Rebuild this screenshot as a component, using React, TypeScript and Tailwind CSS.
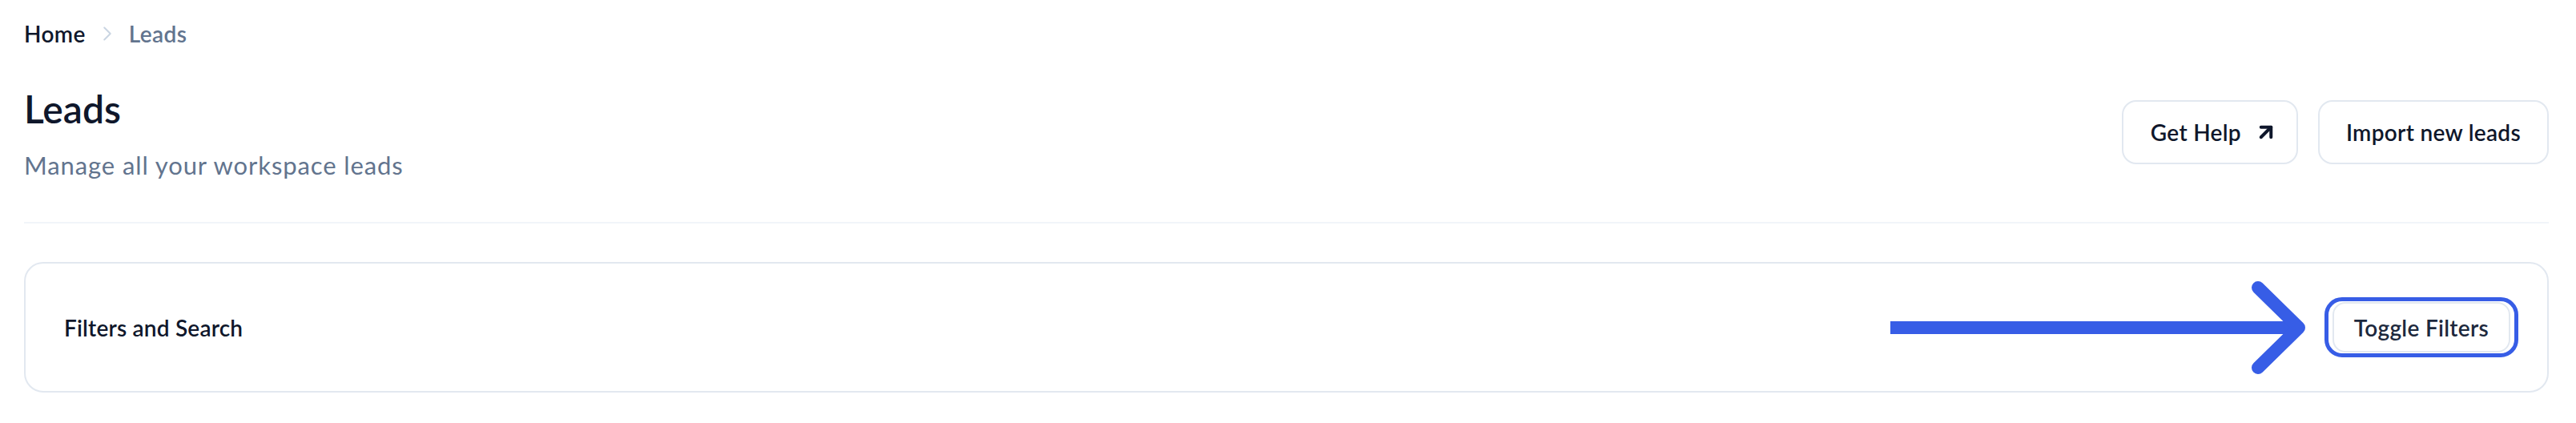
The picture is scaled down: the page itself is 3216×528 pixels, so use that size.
import React from 'react';
import { ArrowUpRight, ChevronRight } from 'lucide-react';

const Arrow = () => (
  <svg width="520" height="120" viewBox="0 0 520 120" fill="none" className="shrink-0">
    <rect x="0" y="52" width="506" height="16" fill="#375de6" />
    <polyline
      points="459,10 510,60 459,110"
      stroke="#375de6"
      strokeWidth="16"
      strokeLinecap="round"
      strokeLinejoin="round"
      fill="none"
    />
  </svg>
);

const App: React.FC = () => {
  return (
    <div className="h-[528px] w-full bg-white pl-[30px] pr-[34px] pt-[22px] font-['Lato',sans-serif] text-slate-900">
      <nav className="flex h-[40px] items-center gap-[12px] text-[28px] font-semibold tracking-[0.4px]">
        <span className="text-slate-900">Home</span>
        <ChevronRight size={30} strokeWidth={1.6} className="text-slate-300" />
        <span className="text-slate-500">Leads</span>
      </nav>

      <div className="mt-[42px] flex items-center justify-between border-b-2 border-slate-100 pb-[51px]">
        <div>
          <h1 className="text-[48px] font-semibold leading-[64px]">Leads</h1>
          <p className="mt-[18px] text-[31px] leading-[40px] tracking-[0.9px] text-slate-500">Manage all your workspace leads</p>
        </div>
        <div className="flex items-center gap-[25px]">
          <button className="flex h-[80px] items-center gap-[16px] rounded-[18px] border-2 border-slate-200 bg-white pl-[34px] pr-[23px] text-[28px] font-semibold tracking-[0.3px] text-slate-900">
            Get Help
            <ArrowUpRight size={30} strokeWidth={3.2} />
          </button>
          <button className="flex h-[80px] items-center rounded-[18px] border-2 border-slate-200 bg-white px-[33px] text-[28px] font-semibold tracking-[0.3px] text-slate-900">
            Import new leads
          </button>
        </div>
      </div>

      <div className="mt-[48px] flex h-[163px] items-center justify-between rounded-[24px] border-2 border-slate-200 pl-[48px] pr-[36px]">
        <h2 className="text-[28px] font-semibold tracking-[0.2px] text-slate-900">Filters and Search</h2>
        <div className="flex items-center gap-[22px]">
          <Arrow />
          <div className="rounded-[22px] border-[5px] border-[#375de6] px-[5px] py-[1px]">
            <button className="flex h-[63px] items-center rounded-[16px] border-2 border-slate-200 bg-white px-[25px] text-[28px] font-semibold tracking-[0.3px] text-slate-800">
              Toggle Filters
            </button>
          </div>
        </div>
      </div>
    </div>
  );
};

export default App;
